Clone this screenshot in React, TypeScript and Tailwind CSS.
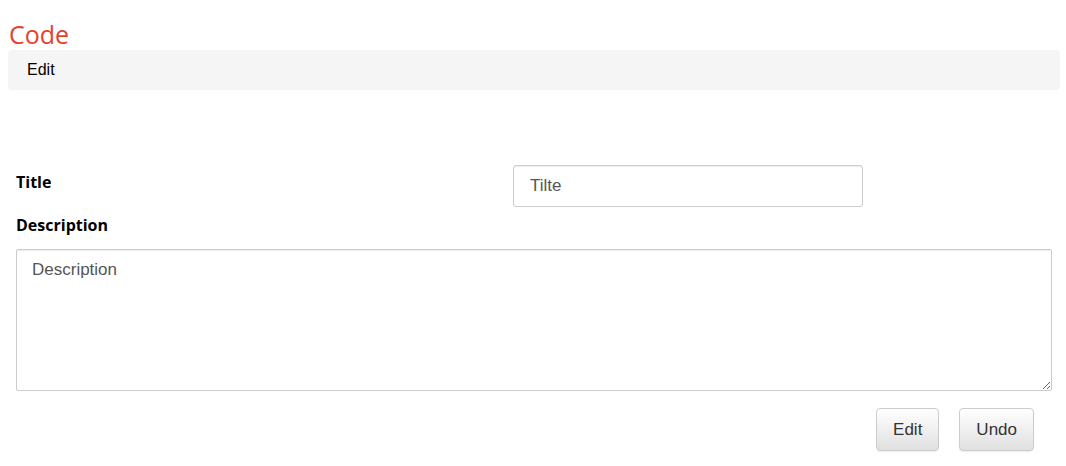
import React from 'react';

const btn =
  "h-[43px] px-4 rounded-[4px] border border-[#ccc] bg-gradient-to-b from-white to-[#e0e0e0] text-[17px] text-[#333] shadow-[0_1px_1px_rgba(0,0,0,0.075)] font-['Liberation_Sans',Arial,sans-serif]";

export default function App() {
  return (
    <div className="min-h-screen bg-white pl-2 pr-[6px] text-black font-['Liberation_Sans',Arial,sans-serif]">
      <h1 className="pt-[19px] pl-px text-[25px] leading-[31px] text-[#e5412d] font-['Open_Sans',sans-serif]">
        Code
      </h1>
      <div className="flex h-10 items-center rounded-[4px] bg-[#f5f5f5] px-[19px] text-[16px]">
        Edit
      </div>

      <form className="mt-[75px] px-2" onSubmit={(e) => e.preventDefault()}>
        <div className="flex items-start">
          <label className="w-[497px] shrink-0 pt-[6px] text-[16px] font-bold leading-[22px] font-['Open_Sans',sans-serif]">
            Title
          </label>
          <input
            type="text"
            placeholder="Tilte"
            className="h-[42px] w-[350px] rounded-[3px] border border-[#ccc] px-4 text-[17px] text-[#555] placeholder:text-[#555] shadow-[inset_0_1px_1px_rgba(0,0,0,0.075)] outline-none"
          />
        </div>

        <label className="mt-[7px] block text-[16px] font-bold leading-[22px] font-['Open_Sans',sans-serif]">
          Description
        </label>
        <textarea
          placeholder="Description"
          className="mt-[13px] block h-[142px] w-full rounded-[2px] border border-[#ccc] px-[15px] pt-[10px] text-[17px] leading-[20px] text-[#555] placeholder:text-[#555] shadow-[inset_0_1px_1px_rgba(0,0,0,0.075)] outline-none"
        />

        <div className="mt-[17px] flex justify-end gap-5 pr-[18px]">
          <button type="button" className={btn}>
            Edit
          </button>
          <button type="button" className={btn}>
            Undo
          </button>
        </div>
      </form>
    </div>
  );
}
